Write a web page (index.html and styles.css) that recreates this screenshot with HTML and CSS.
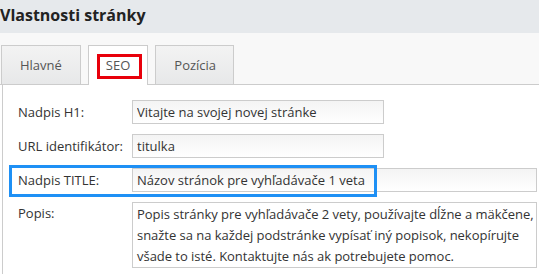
FILE: index.html
```html
<!DOCTYPE html>
<html lang="sk">
<head>
    <meta charset="UTF-8">
    <title>Vlastnosti stránky</title>
    <link rel="stylesheet" href="styles.css">
</head>
<body>
    <div class="page">
        <h1 class="page-title">Vlastnosti stránky</h1>

        <div class="tabs">
            <div class="tab">Hlavné</div>
            <div class="tab active">SEO</div>
            <div class="tab">Pozícia</div>
        </div>

        <div class="panel">
            <div class="row">
                <label for="h1">Nadpis H1:</label>
                <input id="h1" type="text" value="Vitajte na svojej novej stránke">
            </div>
            <div class="row">
                <label for="url">URL identifikátor:</label>
                <input id="url" type="text" value="titulka">
            </div>
            <div class="row">
                <label for="title">Nadpis TITLE:</label>
                <input id="title" class="wide" type="text" value="Názov stránok pre vyhľadávače 1 veta">
            </div>
            <div class="row">
                <label for="desc">Popis:</label>
                <textarea id="desc">Popis stránky pre vyhľadávače 2 vety, používajte dĺžne a mäkčene, snažte sa na každej podstránke vypísať iný popisok, nekopírujte všade to isté. Kontaktujte nás ak potrebujete pomoc.</textarea>
            </div>
        </div>

        <!-- annotation marks drawn over the screenshot -->
        <div class="mark mark-red"></div>
        <div class="mark mark-blue"></div>
    </div>
</body>
</html>
```

FILE: styles.css
```css
body {
    margin: 0;
    font-family: "Open Sans", "Liberation Sans", sans-serif;
    font-size: 13px;
    color: #333;
    background: #fff;
}
.page {
    position: relative;
    height: 274px;
    overflow: hidden;
}
.page-title {
    margin: 0;
    height: 33px;
    line-height: 30px;
    font-size: 16px;
    font-weight: bold;
    color: #222;
    background: #e6e9ec;
}
.tabs {
    display: flex;
    gap: 7px;
    padding: 12px 0 0 1px;
    background: #f8f8f8;
    border-bottom: 1px solid #ccc;
}
.tab {
    height: 38px;
    line-height: 38px;
    padding: 0 18px;
    border: 1px solid #ccc;
    border-bottom: none;
    color: #555;
    background: linear-gradient(#f3f3f3, #e7e8e9);
    margin-bottom: -1px;
    position: relative;
}
.tab.active {
    background: #fff;
    height: 39px;
    padding: 0 17px;
}
.tab:last-child {
    padding: 0 17px 0 18px;
}
.panel {
    margin-left: 2px;
    border-left: 1px solid #ccc;
    padding: 15px 0 10px 15px;
    display: flex;
    flex-direction: column;
    gap: 10px;
}
.row {
    display: flex;
    align-items: flex-start;
}
.row label {
    width: 114px;
    flex: none;
    line-height: 24px;
}
.row:last-child label {
    line-height: 22px;
}
input, textarea {
    box-sizing: border-box;
    font-family: inherit;
    font-size: 13px;
    color: #333;
    border: 1px solid #ccc;
    border-radius: 0;
    background: linear-gradient(#f4f4f4, #fff);
    margin: 0;
}
input {
    width: 252px;
    height: 24px;
    padding: 0 4px;
}
input.wide {
    width: 405px;
}
textarea {
    width: 405px;
    height: 66px;
    padding: 1px 0 1px 4px;
    line-height: 21px;
    letter-spacing: -0.03px;
    resize: none;
    overflow: hidden;
    background: #fff;
}
.mark {
    position: absolute;
    box-sizing: border-box;
    border: 3px solid;
}
.mark-red {
    left: 97px;
    top: 54px;
    width: 45px;
    height: 25px;
    border-color: #e8000b;
}
.mark-blue {
    left: 9px;
    top: 165px;
    width: 368px;
    height: 32px;
    border-color: #1e90f5;
}
```
